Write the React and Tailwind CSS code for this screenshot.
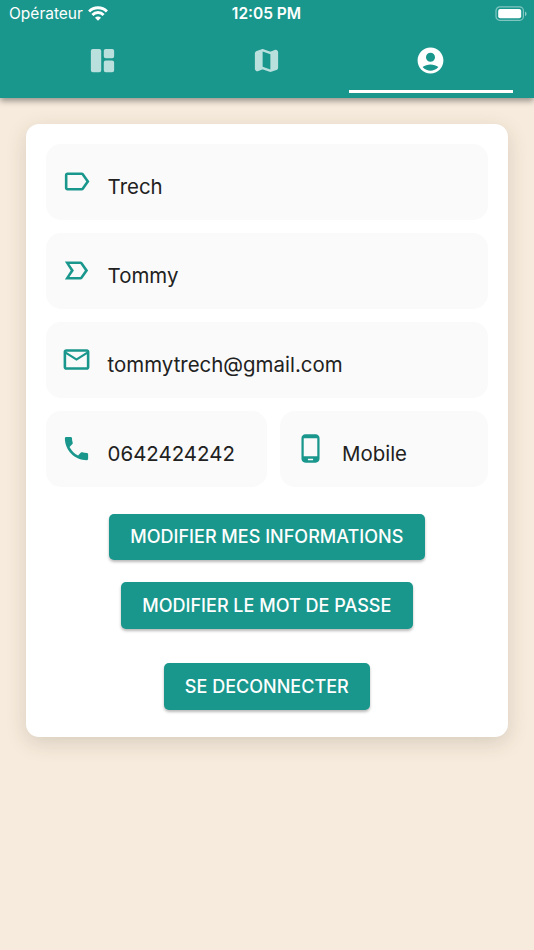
const PATHS = {
  dashboard:
    "M4.5 3h5a1.5 1.5 0 0 1 1.5 1.5v15a1.5 1.5 0 0 1-1.5 1.5h-5a1.5 1.5 0 0 1-1.5-1.5v-15a1.5 1.5 0 0 1 1.5-1.5zM14.500 3h5a1.5 1.5 0 0 1 1.5 1.5v4.2a1.5 1.5 0 0 1-1.5 1.5h-5a1.5 1.5 0 0 1-1.5-1.5v-4.2a1.5 1.5 0 0 1 1.5-1.5zM14.5 12h5a1.5 1.5 0 0 1 1.5 1.5v6a1.5 1.5 0 0 1-1.5 1.5h-5a1.5 1.5 0 0 1-1.5-1.5v-6a1.5 1.5 0 0 1 1.5-1.5z",
  map: "M14.65 4.98l-5-1.75c-.42-.15-.88-.15-1.3-.01L4.36 4.56C3.55 4.84 3 5.6 3 6.46v11.85c0 1.41 1.41 2.37 2.72 1.86l2.93-1.14c.22-.09.47-.09.69-.01l5 1.75c.42.15.88.15 1.3.01l3.99-1.34c.81-.27 1.36-1.04 1.36-1.9V5.69c0-1.41-1.41-2.37-2.72-1.86l-2.93 1.14c-.22.08-.46.09-.69.01zM15 18.89l-6-2.11V5.11l6 2.11v11.67z",
  account:
    "M12 2C6.48 2 2 6.48 2 12s4.48 10 10 10 10-4.48 10-10S17.52 2 12 2zm0 4c1.93 0 3.5 1.57 3.5 3.5S13.93 13 12 13s-3.5-1.57-3.5-3.5S10.07 6 12 6zm0 14c-2.03 0-4.43-.82-6.14-2.88C7.55 15.8 9.68 15 12 15s4.45.8 6.14 2.12C16.43 19.18 14.03 20 12 20z",
  label:
    "M17.63 5.84C17.27 5.33 16.67 5 16 5L5 5.01C3.9 5.01 3 5.9 3 7v10c0 1.1.9 1.99 2 1.99L16 19c.67 0 1.27-.33 1.63-.84L22 12l-4.37-6.16zM16 17H5V7h11l3.55 5L16 17z",
  important:
    "M15 19H3l4.5-7L3 5h12c.65 0 1.26.31 1.63.84L21 12l-4.37 6.16c-.37.52-.98.84-1.63.84zm-8.5-2H15l3.5-5L15 7H6.5l3.5 5-3.5 5z",
  mail: "M22 6c0-1.1-.9-2-2-2H4c-1.1 0-2 .9-2 2v12c0 1.1.9 2 2 2h16c1.1 0 2-.9 2-2V6zm-2 0l-8 5-8-5h16zm0 12H4V8l8 5 8-5v10z",
  phone:
    "M6.62 10.79c1.44 2.83 3.76 5.14 6.59 6.59l2.2-2.2c.27-.27.67-.36 1.02-.24 1.12.37 2.33.57 3.57.57.55 0 1 .45 1 1V20c0 .55-.45 1-1 1-9.39 0-17-7.61-17-17 0-.55.45-1 1-1h3.5c.55 0 1 .45 1 1 0 1.25.2 2.45.57 3.57.11.35.03.74-.25 1.02l-2.2 2.2z",
  mobile:
    "M16 1H8C6.34 1 5 2.34 5 4v16c0 1.66 1.34 3 3 3h8c1.66 0 3-1.34 3-3V4c0-1.66-1.34-3-3-3zm-2 20h-4v-1h4v1zm3.25-3H6.75V4h10.5v14z",
};

function Icon({ name, className = "" }) {
  return (
    <svg viewBox="0 0 24 24" className={`size-[31px] shrink-0 fill-current ${className}`}>
      <path d={PATHS[name]} />
    </svg>
  );
}

function StatusBar() {
  return (
    <div className="grid h-7 grid-cols-3 items-center pr-[7px] pl-[9px] text-[15.5px] leading-7">
      <div className="flex items-center gap-[5px]">
        <span>Opérateur</span>
        <svg viewBox="0 0 20 15" className="-mt-0.5 h-[15px] w-5" fill="none" stroke="currentColor" strokeWidth="2.9">
          <path d="M1.1 5.5a12.6 12.6 0 0 1 17.8 0" />
          <path d="M4.4 8.9a7.9 7.9 0 0 1 11.2 0" />
          <path d="M10 14.8l-3-3.1a4.2 4.2 0 0 1 6 0z" fill="currentColor" stroke="none" />
        </svg>
      </div>
      <span className="-ml-[3px] text-center font-semibold">12:05 PM</span>
      <svg viewBox="0 0 32 15" className="-mt-0.5 h-[15px] w-8 justify-self-end">
        <rect x="1" y="0.9" width="27.4" height="13.4" rx="3.8" fill="none" stroke="white" strokeOpacity="0.45" strokeWidth="1.2" />
        <rect x="3.2" y="3" width="23" height="9.2" rx="2" fill="white" />
        <path d="M30 5.4c2 .8 2 3.8 0 4.6z" fill="white" fillOpacity="0.5" />
      </svg>
    </div>
  );
}

function Tab({ name, active }) {
  return (
    <div
      className={`flex flex-1 justify-center border-b-[3px] pt-[17.4px] ${
        active ? "border-white" : "border-transparent text-white/70"
      }`}
    >
      <Icon name={name} />
    </div>
  );
}

function Field({ icon, children, className = "" }) {
  return (
    <div className={`flex h-[76px] items-start rounded-[15px] bg-[#fafafa] pl-[15px] ${className}`}>
      <Icon name={icon} className="mt-[22.5px] text-[#1a978d]" />
      <span className="mt-[30.5px] ml-4 text-[20.45px] leading-[26px] text-[#212121]">{children}</span>
    </div>
  );
}

function Button({ children, className }) {
  return (
    <button
      className={`h-[46.5px] rounded-[5px] bg-[#1a978d] text-[18.05px] font-medium whitespace-nowrap text-white shadow-[0_2px_3px_rgba(0,0,0,0.28)] ${className}`}
    >
      {children}
    </button>
  );
}

export default function App() {
  return (
    <div className="flex h-[950px] w-[534px] flex-col overflow-hidden bg-[#f7ebdd] font-['Inter',sans-serif]">
      <header className="relative z-10 flex h-[98px] shrink-0 flex-col bg-[#1a978d] text-white shadow-[0_3px_6px_rgba(0,0,0,0.38)]">
        <StatusBar />
        <nav className="mr-[21px] ml-[20.8px] flex h-[65px]">
          <Tab name="dashboard" />
          <Tab name="map" />
          <Tab name="account" active />
        </nav>
      </header>
      <main className="mx-[26px] mt-[26px] h-[613px] rounded-[13px] bg-white pt-[19.5px] pr-5 pl-[19.6px] shadow-[0_6px_20px_rgba(60,60,30,0.17)]">
        <div className="flex flex-col gap-[13px]">
          <Field icon="label">Trech</Field>
          <Field icon="important">Tommy</Field>
          <Field icon="mail">tommytrech@gmail.com</Field>
          <div className="flex gap-[13px]">
            <Field icon="phone" className="w-[221.4px]">0642424242</Field>
            <Field icon="mobile" className="w-[208px]">Mobile</Field>
          </div>
        </div>
        <div className="mt-[27.2px] flex flex-col items-center">
          <Button className="w-[316px]">MODIFIER MES INFORMATIONS</Button>
          <Button className="mt-[22px] w-[292px]">MODIFIER LE MOT DE PASSE</Button>
          <Button className="mt-[34.5px] w-[206px]">SE DECONNECTER</Button>
        </div>
      </main>
    </div>
  );
}
